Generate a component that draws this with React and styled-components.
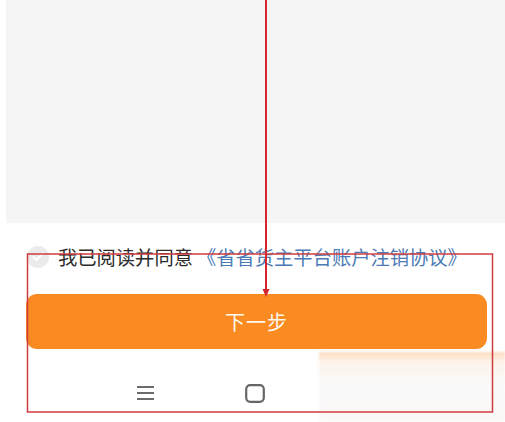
import React from 'react'
import styled, { createGlobalStyle } from 'styled-components'

const GlobalStyle = createGlobalStyle`
  html, body {
    margin: 0;
    padding: 0;
    background: #ffffff;
    font-family: "Noto Sans CJK SC", "Noto Sans", sans-serif;
  }
`

const Page = styled.div`
  position: relative;
  width: 505px;
  height: 422px;
  overflow: hidden;
  background: #ffffff;
`

const GreyPanel = styled.div`
  height: 223px;
  margin-left: 6px;
  background: #f5f5f5;
`

const AgreeRow = styled.div`
  display: flex;
  align-items: center;
  gap: 9px;
  height: 24px;
  margin: 22px 0 0 27px;
  font-size: 19.3px;
  line-height: 24px;
  color: #2b2b2b;
  white-space: nowrap;
`

const Check = styled.span`
  display: flex;
  align-items: center;
  justify-content: center;
  width: 22px;
  height: 22px;
  border-radius: 50%;
  background: #ebebeb;
  flex-shrink: 0;
`

const Agreement = styled.span`
  color: #4b7bb5;
  margin-left: 4px;
`

const NextButton = styled.button`
  display: flex;
  align-items: center;
  justify-content: center;
  width: 461px;
  height: 55px;
  margin: 25px 0 0 26px;
  border: none;
  border-radius: 11px;
  background: #f98b22;
  color: #fff8ee;
  font-family: inherit;
  font-size: 20px;
  letter-spacing: 1px;
`

const NavBar = styled.div`
  display: flex;
  align-items: center;
  height: 28px;
  margin-top: 30px;
  padding-left: 136px;
  gap: 90px;
`

const NavIcon = styled.svg`
  display: block;
`

const Annotation = styled.svg`
  position: absolute;
  inset: 0;
  pointer-events: none;
`

const Blur = styled.div`
  position: absolute;
  left: 319px;
  top: 352px;
  width: 186px;
  height: 70px;
  background: linear-gradient(180deg, #fcdcbf 0%, #fdf3ea 14%, #fafafa 50%, #fcf8f7 100%);
  filter: blur(1px);
`

export default function App() {
  return (
    <Page>
      <GlobalStyle />
      <GreyPanel />
      <AgreeRow>
        <Check>
          <svg width="12" height="10" viewBox="0 0 12 10">
            <path d="M1.5 5l3 3 6-6.5" fill="none" stroke="#ffffff" strokeWidth="2" strokeLinecap="round" strokeLinejoin="round" />
          </svg>
        </Check>
        <span>我已阅读并同意<Agreement>《省省货主平台账户注销协议》</Agreement></span>
      </AgreeRow>
      <NextButton>下一步</NextButton>
      <NavBar>
        <NavIcon width="19" height="16" viewBox="0 0 19 16">
          <path d="M1 2h17M1 8h17M1 14h17" stroke="#6b6b6b" strokeWidth="2" />
        </NavIcon>
        <NavIcon width="20" height="19" viewBox="0 0 20 19">
          <rect x="1.2" y="1.2" width="17.6" height="16.6" rx="4" fill="none" stroke="#666666" strokeWidth="2.2" />
        </NavIcon>
      </NavBar>
      <Blur />
      <Annotation width="505" height="422" viewBox="0 0 505 422">
        <rect x="27.5" y="254" width="465" height="158" fill="none" stroke="#cf3c40" strokeWidth="1.5" />
        <line x1="266" y1="0" x2="266" y2="290" stroke="#d4262c" strokeWidth="2" />
        <path d="M262.5 289 L266 297 L269.5 289 Z" fill="#d4262c" />
      </Annotation>
    </Page>
  )
}
